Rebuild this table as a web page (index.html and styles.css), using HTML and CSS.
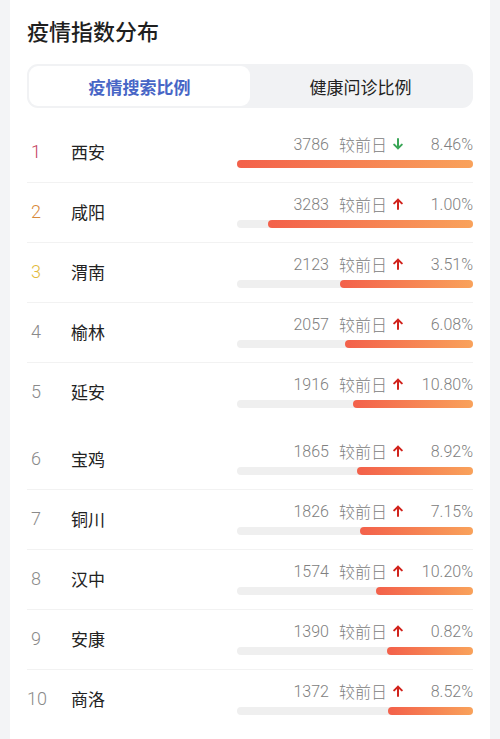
FILE: index.html
```html
<!DOCTYPE html>
<html lang="zh-CN">
<head>
    <meta charset="UTF-8">
    <meta name="viewport" content="width=device-width, initial-scale=1.0">
    <title>疫情指数分布</title>
    <link rel="stylesheet" href="styles.css">
</head>
<body>
<div class="panel">
    <h2 class="panel-title">疫情指数分布</h2>

    <div class="tabs">
        <div class="tab active">疫情搜索比例</div>
        <div class="tab">健康问诊比例</div>
    </div>

    <ul class="rank-list">
        <li class="rank-row">
            <div class="rank-left"><span class="rank top1">1</span><span class="city">西安</span></div>
            <div class="stats">
                <div class="stats-line">
                    <span class="num">3786</span><span class="label">较前日</span>
                    <svg class="arrow down" viewBox="0 0 10 12"><path d="M5 1v9.5M1.2 6.6L5 10.4 8.8 6.6"/></svg>
                    <span class="pct">8.46%</span>
                </div>
                <div class="track"><div class="fill" style="width: 100%"></div></div>
            </div>
        </li>
        <li class="rank-row">
            <div class="rank-left"><span class="rank top2">2</span><span class="city">咸阳</span></div>
            <div class="stats">
                <div class="stats-line">
                    <span class="num">3283</span><span class="label">较前日</span>
                    <svg class="arrow up" viewBox="0 0 10 12"><path d="M5 11V1.5M1.2 5.4L5 1.6 8.8 5.4"/></svg>
                    <span class="pct">1.00%</span>
                </div>
                <div class="track"><div class="fill" style="width: 86.9%"></div></div>
            </div>
        </li>
        <li class="rank-row">
            <div class="rank-left"><span class="rank top3">3</span><span class="city">渭南</span></div>
            <div class="stats">
                <div class="stats-line">
                    <span class="num">2123</span><span class="label">较前日</span>
                    <svg class="arrow up" viewBox="0 0 10 12"><path d="M5 11V1.5M1.2 5.4L5 1.6 8.8 5.4"/></svg>
                    <span class="pct">3.51%</span>
                </div>
                <div class="track"><div class="fill" style="width: 56.4%"></div></div>
            </div>
        </li>
        <li class="rank-row">
            <div class="rank-left"><span class="rank">4</span><span class="city">榆林</span></div>
            <div class="stats">
                <div class="stats-line">
                    <span class="num">2057</span><span class="label">较前日</span>
                    <svg class="arrow up" viewBox="0 0 10 12"><path d="M5 11V1.5M1.2 5.4L5 1.6 8.8 5.4"/></svg>
                    <span class="pct">6.08%</span>
                </div>
                <div class="track"><div class="fill" style="width: 54.2%"></div></div>
            </div>
        </li>
        <li class="rank-row tall">
            <div class="rank-left"><span class="rank">5</span><span class="city">延安</span></div>
            <div class="stats">
                <div class="stats-line">
                    <span class="num">1916</span><span class="label">较前日</span>
                    <svg class="arrow up" viewBox="0 0 10 12"><path d="M5 11V1.5M1.2 5.4L5 1.6 8.8 5.4"/></svg>
                    <span class="pct">10.80%</span>
                </div>
                <div class="track"><div class="fill" style="width: 50.8%"></div></div>
            </div>
        </li>
        <li class="rank-row">
            <div class="rank-left"><span class="rank">6</span><span class="city">宝鸡</span></div>
            <div class="stats">
                <div class="stats-line">
                    <span class="num">1865</span><span class="label">较前日</span>
                    <svg class="arrow up" viewBox="0 0 10 12"><path d="M5 11V1.5M1.2 5.4L5 1.6 8.8 5.4"/></svg>
                    <span class="pct">8.92%</span>
                </div>
                <div class="track"><div class="fill" style="width: 49.2%"></div></div>
            </div>
        </li>
        <li class="rank-row">
            <div class="rank-left"><span class="rank">7</span><span class="city">铜川</span></div>
            <div class="stats">
                <div class="stats-line">
                    <span class="num">1826</span><span class="label">较前日</span>
                    <svg class="arrow up" viewBox="0 0 10 12"><path d="M5 11V1.5M1.2 5.4L5 1.6 8.8 5.4"/></svg>
                    <span class="pct">7.15%</span>
                </div>
                <div class="track"><div class="fill" style="width: 47.9%"></div></div>
            </div>
        </li>
        <li class="rank-row">
            <div class="rank-left"><span class="rank">8</span><span class="city">汉中</span></div>
            <div class="stats">
                <div class="stats-line">
                    <span class="num">1574</span><span class="label">较前日</span>
                    <svg class="arrow up" viewBox="0 0 10 12"><path d="M5 11V1.5M1.2 5.4L5 1.6 8.8 5.4"/></svg>
                    <span class="pct">10.20%</span>
                </div>
                <div class="track"><div class="fill" style="width: 41.1%"></div></div>
            </div>
        </li>
        <li class="rank-row">
            <div class="rank-left"><span class="rank">9</span><span class="city">安康</span></div>
            <div class="stats">
                <div class="stats-line">
                    <span class="num">1390</span><span class="label">较前日</span>
                    <svg class="arrow up" viewBox="0 0 10 12"><path d="M5 11V1.5M1.2 5.4L5 1.6 8.8 5.4"/></svg>
                    <span class="pct">0.82%</span>
                </div>
                <div class="track"><div class="fill" style="width: 36.4%"></div></div>
            </div>
        </li>
        <li class="rank-row last">
            <div class="rank-left"><span class="rank">10</span><span class="city">商洛</span></div>
            <div class="stats">
                <div class="stats-line">
                    <span class="num">1372</span><span class="label">较前日</span>
                    <svg class="arrow up" viewBox="0 0 10 12"><path d="M5 11V1.5M1.2 5.4L5 1.6 8.8 5.4"/></svg>
                    <span class="pct">8.52%</span>
                </div>
                <div class="track"><div class="fill" style="width: 36%"></div></div>
            </div>
        </li>
    </ul>
</div>
</body>
</html>
```

FILE: styles.css
```css
* {
    box-sizing: border-box;
}

body {
    margin: 0;
    background-color: #f3f4f6;
    font-family: 'Roboto', 'Noto Sans CJK SC', sans-serif;
    color: #222;
}

.panel {
    margin: 0 10px;
    min-height: 100vh;
    background-color: #fff;
    padding: 18px 17px 0;
}

.panel-title {
    margin: 0;
    font-size: 22px;
    line-height: 30px;
    font-weight: 500;
    color: #1f1f1f;
}

.tabs {
    margin-top: 16px;
    height: 44px;
    padding: 2px;
    display: grid;
    grid-template-columns: 1fr 1fr;
    background-color: #f1f2f4;
    border-radius: 11px;
}

.tab {
    display: flex;
    justify-content: center;
    align-items: center;
    font-size: 17px;
    color: #222;
    border-radius: 9px;
}

.tab.active {
    background-color: #fff;
    color: #4866c6;
    font-weight: 700;
}

.rank-list {
    list-style: none;
    margin: 15px 0 0;
    padding: 0;
}

.rank-row {
    display: flex;
    height: 60px;
    border-bottom: 1px solid #f2f2f2;
}

.rank-row.tall {
    height: 67px;
    border-bottom: none;
}

.rank-row.last {
    border-bottom: none;
}

.rank-left {
    display: flex;
    align-items: center;
    height: 24px;
    margin-top: 16px;
}

.rank {
    width: 18px;
    text-align: center;
    font-size: 18px;
    font-weight: 300;
    color: #8a8a8a;
}

.rank.top1 {
    color: #c23b5c;
}

.rank.top2 {
    color: #d7893b;
}

.rank.top3 {
    color: #e2b93c;
}

.city {
    margin-left: 26px;
    font-size: 17px;
    color: #222;
}

.stats {
    margin-left: auto;
    width: 236px;
    padding-top: 11px;
}

.stats-line {
    display: flex;
    justify-content: flex-end;
    align-items: center;
    height: 20px;
    font-size: 16px;
    font-weight: 300;
    color: #808080;
}

.label {
    margin-left: 10px;
}

.arrow {
    flex: none;
    width: 10px;
    height: 12px;
    margin: 0 10px 0 6px;
    fill: none;
    stroke-width: 2;
    stroke-linecap: round;
    stroke-linejoin: round;
}

.arrow.up {
    stroke: #d1231c;
}

.arrow.down {
    stroke: #3aa657;
}

.pct {
    flex: none;
    width: 60px;
    text-align: right;
}

.track {
    margin-top: 6px;
    height: 8px;
    border-radius: 4px;
    background-color: #efefef;
    display: flex;
    justify-content: flex-end;
}

.fill {
    height: 100%;
    border-radius: 4px;
    background: linear-gradient(90deg, #f3604a, #f9a25b);
}
```
